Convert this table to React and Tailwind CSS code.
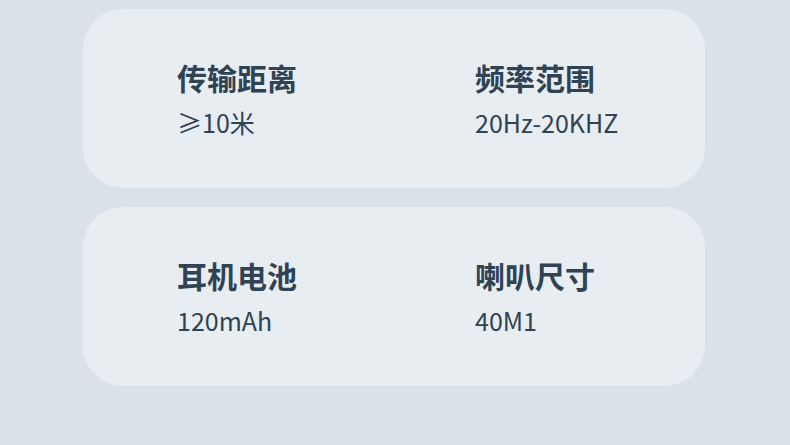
const specs = [
  [
    { label: "传输距离", value: "≥10米" },
    { label: "频率范围", value: "20Hz-20KHZ" },
  ],
  [
    { label: "耳机电池", value: "120mAh" },
    { label: "喇叭尺寸", value: "40M1" },
  ],
];

export default function App() {
  return (
    <div
      className="w-[790px] h-[445px] bg-[#dae2e9] pt-[9px] pl-[83px] flex flex-col gap-[19px]"
      style={{ fontFamily: '"Noto Sans CJK SC", "Noto Sans", sans-serif' }}
    >
      {specs.map((row, i) => (
        <div
          key={i}
          className="w-[622px] h-[179px] rounded-[40px] bg-[#e8edf1] pl-[94px] pt-[48px] grid grid-cols-[298px_1fr] content-start"
        >
          {row.map((item) => (
            <div key={item.label} className="flex flex-col text-[#2f4354]">
              <div className="text-[30px] font-bold leading-[40px]">{item.label}</div>
              <div className="text-[25px] font-normal leading-[32px] mt-[9px]">{item.value}</div>
            </div>
          ))}
        </div>
      ))}
    </div>
  );
}
